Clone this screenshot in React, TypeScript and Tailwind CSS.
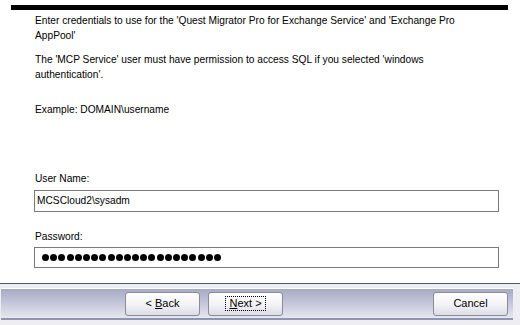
import React from "react"

const font = { fontFamily: '"Liberation Sans", Arial, sans-serif' }

const WizButton = ({ children, focused }: { children: React.ReactNode; focused?: boolean }) => {
  return (
    <button className="h-[24px] w-[75px] rounded-[3px] border border-[#8a8c98] bg-gradient-to-b from-white via-[#f4f4f8] to-[#dcdce6] text-[11px] text-black flex items-center justify-center">
      <span className={focused ? "px-[3px] py-0 border border-dotted border-black leading-[13px]" : "leading-[13px]"}>{children}</span>
    </button>
  )
}

export default function App() {
  const dots = Array.from({ length: 22 })
  return (
    <div className="w-[520px] h-[325px] bg-white flex flex-col overflow-hidden text-black" style={font}>
      <div className="ml-[11px] mt-[5px] w-[497px] h-[5px] bg-black" />
      <div className="pl-[35px] pt-[3px] text-[10.2px] leading-[15px]">
        <div>Enter credentials to use for the 'Quest Migrator Pro for Exchange Service' and 'Exchange Pro</div>
        <div>AppPool'</div>
        <div className="mt-[9px]">The 'MCP Service' user must have permission to access SQL if you selected 'windows</div>
        <div>authentication'.</div>
        <div className="mt-[20px]">Example: DOMAIN\username</div>
      </div>

      <div className="pl-[34px] pr-[21px] mt-[54px] text-[10.2px]">
        <div className="pl-[1px] leading-[15px]">User Name:</div>
        <div className="mt-[4px] h-[22px] border border-[#7a7a7a] flex items-center pl-[2px]">MCSCloud2\sysadm</div>
        <div className="pl-[1px] mt-[17px] leading-[15px]">Password:</div>
        <div className="mt-[3px] h-[21px] border border-[#7a7a7a] flex items-center pl-[7px] gap-[1.2px]">
          {dots.map((_, i) => (
            <span key={i} className="w-[7px] h-[7px] rounded-full bg-black" />
          ))}
        </div>
      </div>

      <div className="mt-auto h-[42px] border-t border-[#4c5a78] bg-[#eeeef2] pt-[4px]">
        <div className="h-[32px] mx-[1px] mr-[7px] border-t border-white border-b-2 border-b-[#9094b4] bg-gradient-to-b from-[#a6aac6] to-[#e6e7ef] flex items-center">
          <div className="ml-[124px]">
            <WizButton>
              {"< "}
              <span className="underline">B</span>ack
            </WizButton>
          </div>
          <div className="ml-[8px]">
            <WizButton focused>
              <span className="underline">N</span>ext {">"}
            </WizButton>
          </div>
          <div className="ml-auto mr-[5px]">
            <WizButton>Cancel</WizButton>
          </div>
        </div>
      </div>
    </div>
  )
}
